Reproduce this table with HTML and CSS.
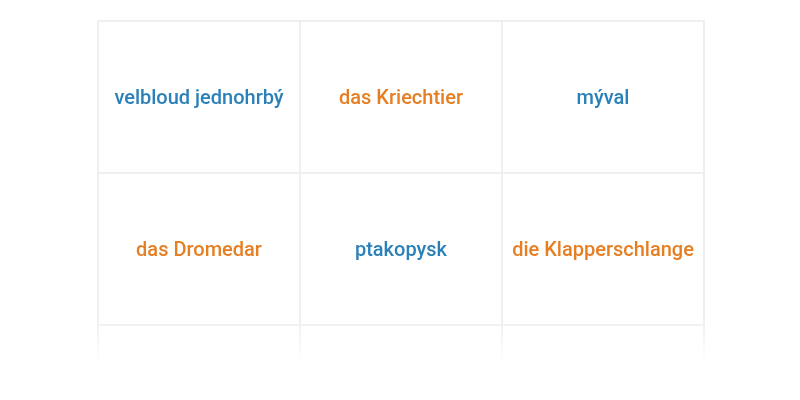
FILE: index.html
```html
<!DOCTYPE html>
<html>
<head>
<meta charset="utf-8">
<link rel="stylesheet" href="styles.css">
</head>
<body>
<div class="board">
  <div class="grid">
    <div class="cell blue">velbloud jednohrbý</div>
    <div class="cell orange">das Kriechtier</div>
    <div class="cell blue">mýval</div>
    <div class="cell orange">das Dromedar</div>
    <div class="cell blue">ptakopysk</div>
    <div class="cell orange">die Klapperschlange</div>
    <div class="cell"></div>
    <div class="cell"></div>
    <div class="cell"></div>
  </div>
</div>
</body>
</html>
```
FILE: styles.css
```css
html, body {
  margin: 0;
  padding: 0;
  background: #ffffff;
}
body {
  font-family: Roboto, "Liberation Sans", sans-serif;
}
.board {
  width: 608px;
  margin: 20px 0 0 97px;
  height: 345px;
  overflow: hidden;
  -webkit-mask-image: linear-gradient(to bottom, #000 300px, transparent 345px);
  mask-image: linear-gradient(to bottom, #000 300px, transparent 345px);
}
.grid {
  display: grid;
  grid-template-columns: repeat(3, 202px);
  grid-auto-rows: 152px;
  border-left: 2px solid #efefef;
  border-top: 2px solid #efefef;
  width: 606px;
}
.cell {
  display: flex;
  align-items: center;
  justify-content: center;
  border-right: 2px solid #efefef;
  border-bottom: 2px solid #efefef;
  font-size: 20px;
  font-weight: 500;
  white-space: nowrap;
}
.blue { color: #2a80b9; }
.orange { color: #e67e22; }
```
